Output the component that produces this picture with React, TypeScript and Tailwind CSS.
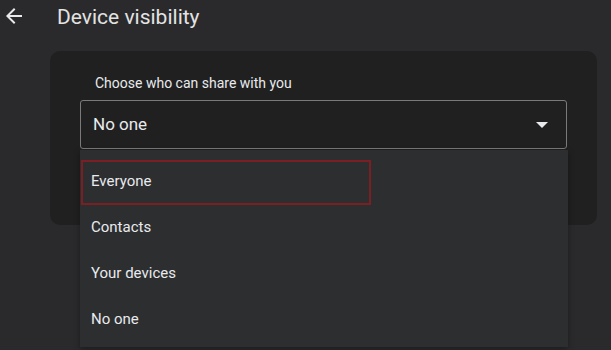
import React from "react";

export default function App() {
  const items = ["Everyone", "Contacts", "Your devices", "No one"];
  return (
    <div
      className="relative w-[611px] h-[350px] overflow-hidden bg-[#2a2a2c] text-[#e8eaed]"
      style={{ fontFamily: "Roboto, 'Noto Sans', sans-serif" }}
    >
      <div className="flex items-start h-[51px] pt-[4px]">
        <svg width="24" height="24" viewBox="0 0 24 24" className="ml-[2px] mt-[0px]" fill="#e8eaed">
          <path d="M20 11H7.83l5.59-5.59L12 4l-8 8 8 8 1.41-1.41L7.83 13H20v-2z" />
        </svg>
        <div className="ml-[31px] -mt-[1px] text-[21px] leading-[28px] text-[#e3e3e3]">Device visibility</div>
      </div>
      <div className="ml-[50px] w-[547px] h-[174px] rounded-[10px] bg-[#202020] pt-[22px]">
        <div className="ml-[45px] text-[14px] leading-[20px] text-[#e8eaed]">Choose who can share with you</div>
        <div className="ml-[30px] mt-[7px] w-[487px] h-[49px] rounded-[3px] border-[1.5px] border-[#7a7a7a] flex items-center justify-between pl-[12px] pr-[18px]">
          <span className="text-[17px] text-[#e8eaed]">No one</span>
          <svg width="12" height="6" viewBox="0 0 12 6">
            <path d="M0 0 L12 0 L6 6 Z" fill="#e8eaed" />
          </svg>
        </div>
      </div>
      <div className="absolute left-[80px] top-[150px] w-[488px] h-[197px] bg-[#2d2e30] pt-[8px] shadow-[0_2px_6px_rgba(0,0,0,0.35)]">
        {items.map((t) => (
          <div key={t} className="h-[46px] flex items-center pl-[11px] text-[15px] text-[#e8eaed]">
            {t}
          </div>
        ))}
        <div className="absolute left-[1px] top-[10px] w-[290px] h-[45px] border-2 border-[#7c1f24]" />
      </div>
    </div>
  );
}
